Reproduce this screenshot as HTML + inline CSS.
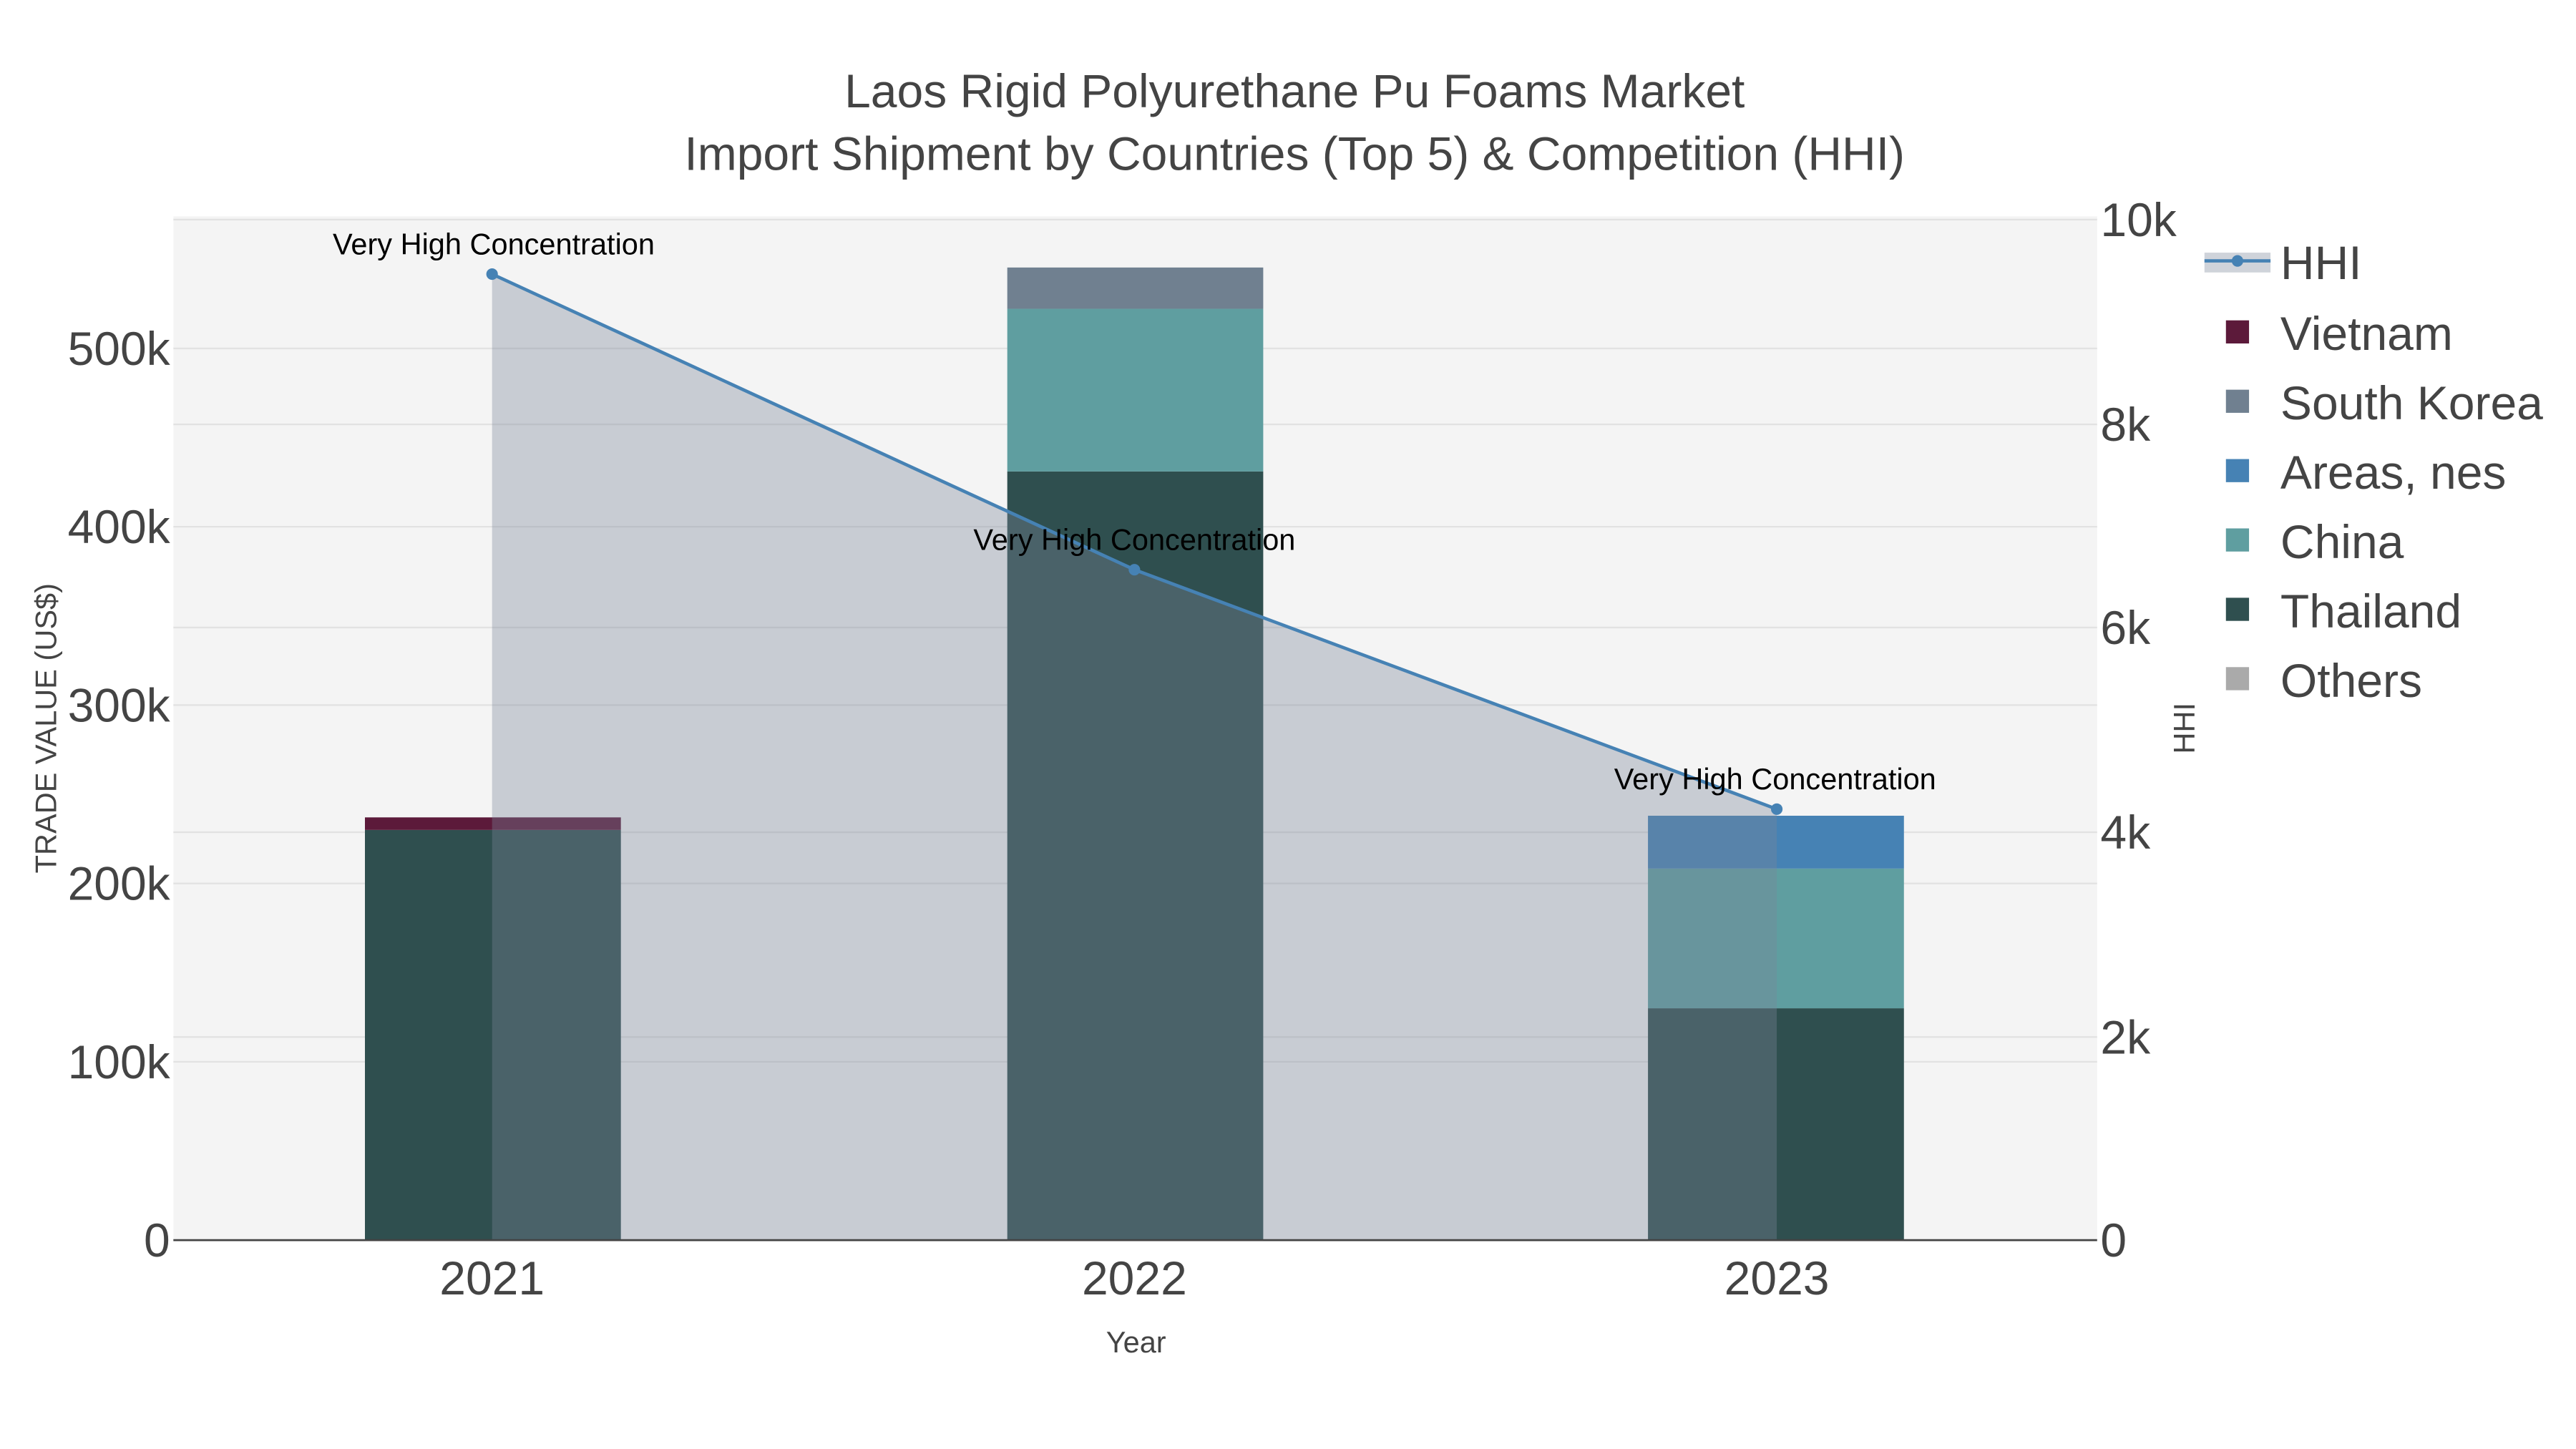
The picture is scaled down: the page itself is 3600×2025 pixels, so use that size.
<!DOCTYPE html>
<html><head><meta charset="utf-8"><style>html,body{margin:0;padding:0;background:#fff}svg{display:block}</style></head><body>
<svg width="3600" height="2025" viewBox="0 0 1560 877.5" xmlns="http://www.w3.org/2000/svg" font-family="Liberation Sans, sans-serif">
<rect x="0" y="0" width="1560" height="877.5" fill="#fff"/>
<rect x="105" y="131" width="1165" height="620" fill="#f4f4f4"/>
<g stroke="#e2e2e2" stroke-width="1">
<line x1="105" x2="1270" y1="643" y2="643"/><line x1="105" x2="1270" y1="535" y2="535"/><line x1="105" x2="1270" y1="427" y2="427"/><line x1="105" x2="1270" y1="319" y2="319"/><line x1="105" x2="1270" y1="211" y2="211"/>
<line x1="105" x2="1270" y1="628" y2="628"/><line x1="105" x2="1270" y1="504" y2="504"/><line x1="105" x2="1270" y1="380" y2="380"/><line x1="105" x2="1270" y1="257" y2="257"/><line x1="105" x2="1270" y1="133" y2="133"/>
</g>
<rect x="221" y="502.6" width="155" height="248.4" fill="#2f4f4f"/>
<rect x="221" y="495" width="155" height="7.6" fill="#5c1a3a"/>
<rect x="610" y="285.5" width="155" height="465.5" fill="#2f4f4f"/>
<rect x="610" y="187" width="155" height="98.5" fill="#5f9ea0"/>
<rect x="610" y="162" width="155" height="25" fill="#708090"/>
<rect x="998" y="610.6" width="155" height="140.4" fill="#2f4f4f"/>
<rect x="998" y="526" width="155" height="84.6" fill="#5f9ea0"/>
<rect x="998" y="494" width="155" height="32" fill="#4682b4"/>
<polygon points="298,751 298,166 687,345 1076,490 1076,751" fill="rgb(122,133,153)" fill-opacity="0.36"/>
<polyline points="298,166 687,345 1076,490" fill="none" stroke="#4682b4" stroke-width="2"/>
<circle cx="298" cy="166" r="3.5" fill="#4682b4"/><circle cx="687" cy="345" r="3.5" fill="#4682b4"/><circle cx="1076" cy="490" r="3.5" fill="#4682b4"/>
<line x1="105" x2="1270" y1="751" y2="751" stroke="#444" stroke-width="1.2"/>
<g font-size="18" fill="#000" text-anchor="middle">
<text x="299" y="154">Very High Concentration</text>
<text x="687" y="333">Very High Concentration</text>
<text x="1075" y="478">Very High Concentration</text>
</g>
<g font-size="28.6" fill="#444" text-anchor="middle">
<text x="784" y="65">Laos Rigid Polyurethane Pu Foams Market</text>
<text x="784" y="103">Import Shipment by Countries (Top 5) &amp; Competition (HHI)</text>
</g>
<g font-size="28.6" fill="#444" text-anchor="end">
<text x="103" y="761">0</text><text x="103" y="653">100k</text><text x="103" y="545">200k</text><text x="103" y="437">300k</text><text x="103" y="329">400k</text><text x="103" y="221">500k</text>
</g>
<g font-size="28.6" fill="#444" text-anchor="start">
<text x="1272" y="761">0</text><text x="1272" y="638">2k</text><text x="1272" y="514">4k</text><text x="1272" y="390">6k</text><text x="1272" y="267">8k</text><text x="1272" y="143">10k</text>
</g>
<g font-size="28.6" fill="#444" text-anchor="middle">
<text x="298" y="784">2021</text><text x="687" y="784">2022</text><text x="1076" y="784">2023</text>
</g>
<text x="688" y="819" font-size="18" fill="#444" text-anchor="middle">Year</text>
<text transform="translate(34,441) rotate(-90)" font-size="18" fill="#444" text-anchor="middle">TRADE VALUE (US$)</text>
<text transform="translate(1329,441) rotate(-90)" font-size="18" fill="#444" text-anchor="middle">HHI</text>
<rect x="1335" y="153" width="40" height="12" fill="rgb(122,133,153)" fill-opacity="0.36"/>
<line x1="1335" x2="1375" y1="158" y2="158" stroke="#4682b4" stroke-width="2"/><circle cx="1355" cy="158" r="3.5" fill="#4682b4"/>
<rect x="1348" y="194" width="14" height="14" fill="#5c1a3a"/>
<rect x="1348" y="236" width="14" height="14" fill="#708090"/>
<rect x="1348" y="278" width="14" height="14" fill="#4682b4"/>
<rect x="1348" y="320" width="14" height="14" fill="#5f9ea0"/>
<rect x="1348" y="362" width="14" height="14" fill="#2f4f4f"/>
<rect x="1348" y="404" width="14" height="14" fill="#aaaaaa"/>
<g font-size="28.6" fill="#444">
<text x="1381" y="169">HHI</text><text x="1381" y="212">Vietnam</text><text x="1381" y="254">South Korea</text><text x="1381" y="296">Areas, nes</text><text x="1381" y="338">China</text><text x="1381" y="380">Thailand</text><text x="1381" y="422">Others</text>
</g>
</svg>
</body></html>
